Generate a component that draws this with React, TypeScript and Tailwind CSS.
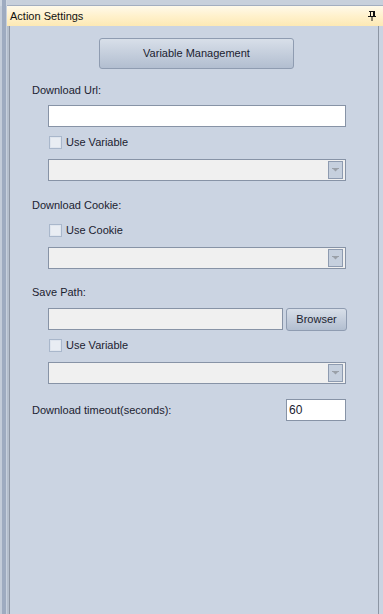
import React from "react";

const font = { fontFamily: '"Liberation Sans", Arial, sans-serif' };

function Checkbox({ label }: { label: string }) {
  return (
    <div className="flex items-center h-[16px] ml-[39px]">
      <div className="w-[13px] h-[13px] border border-[#a9b7cb] bg-[#dfe5ee] p-[1px]">
        <div className="w-full h-full bg-[#e9edf3]" />
      </div>
      <span className="ml-[4px] text-[11px] text-[#1b2230]">{label}</span>
    </div>
  );
}

function Select() {
  return (
    <div className="ml-[38px] w-[298px] h-[22px] border border-[#8793a6] bg-[#f0f0f0] flex justify-end items-center pr-[2px]">
      <div className="w-[15px] h-[18px] border border-[#8e9bb0] bg-[#c6d0de] flex items-center justify-center">
        <svg width="7" height="4" viewBox="0 0 7 4">
          <rect x="0" y="0" width="7" height="1" fill="#9aa0a8" />
          <polygon points="1,1 6,1 3.5,3.5" fill="#9aa0a8" />
        </svg>
      </div>
    </div>
  );
}

export default function App() {
  return (
    <div className="w-[383px] h-[614px] bg-[#c9d2df] flex flex-col overflow-hidden" style={font}>
      <div className="h-[6px] flex shrink-0">
        <div className="w-[7px] flex">
          <div className="w-[2px] bg-[#cdd5e0]" />
          <div className="w-[4px] bg-[#9eabc0]" />
          <div className="w-[1px] bg-[#cdd5e0]" />
        </div>
        <div className="flex-1 bg-[#c8d0dc] border-b border-[#a3aec0]" />
      </div>
      <div className="flex flex-1">
        <div className="w-[7px] flex shrink-0">
          <div className="w-[2px] bg-[#c3ccd9]" />
          <div className="w-[4px] bg-[#9eabc0]" />
          <div className="w-[1px] bg-[#c7d0dd]" />
        </div>
        <div className="flex-1 flex flex-col">
          <div className="h-[20px] bg-gradient-to-b from-[#fff9ea] via-[#fff1cc] to-[#fde9b4] flex items-center justify-between pl-[3px] pr-[7px] shrink-0">
            <span className="text-[11px] text-[#111]">Action Settings</span>
            <svg width="8" height="10" viewBox="0 0 8 10">
              <rect x="1" y="0" width="6" height="1" fill="#111" />
              <rect x="2" y="1" width="1" height="5" fill="#111" />
              <rect x="5" y="1" width="2" height="5" fill="#111" />
              <rect x="0" y="5" width="8" height="1" fill="#111" />
              <rect x="3.5" y="6" width="1" height="4" fill="#111" />
            </svg>
          </div>
          <div className="flex-1 flex">
            <div className="w-[2px] bg-[#b5bfcd]" />
            <div className="w-[1px] bg-[#8d96a4]" />
            <div className="flex-1 bg-[#cbd4e2] flex flex-col text-[11px] text-[#1b2230]">
              <div className="mt-[12px] ml-[89px] w-[195px] h-[31px] rounded-[3px] border border-[#8f9cb1] bg-gradient-to-b from-[#d8dfe9] to-[#b2bed0] flex items-center justify-center">
                Variable Management
              </div>
              <div className="mt-[13px] ml-[22px] h-[16px] leading-[16px]">Download Url:</div>
              <div className="mt-[7px] ml-[38px] w-[298px] h-[22px] border border-[#8793a6] bg-white" />
              <div className="mt-[7px]"><Checkbox label="Use Variable" /></div>
              <div className="mt-[9px]"><Select /></div>
              <div className="mt-[16px] ml-[22px] h-[16px] leading-[16px]">Download Cookie:</div>
              <div className="mt-[9px]"><Checkbox label="Use Cookie" /></div>
              <div className="mt-[9px]"><Select /></div>
              <div className="mt-[15px] ml-[22px] h-[16px] leading-[16px]">Save Path:</div>
              <div className="mt-[8px] ml-[38px] flex">
                <div className="w-[235px] h-[22px] border border-[#8793a6] bg-[#f0f0f0]" />
                <div className="ml-[3px] w-[61px] h-[23px] rounded-[3px] border border-[#8f9cb1] bg-gradient-to-b from-[#d8dfe9] to-[#b2bed0] flex items-center justify-center">
                  Browser
                </div>
              </div>
              <div className="mt-[6px]"><Checkbox label="Use Variable" /></div>
              <div className="mt-[9px]"><Select /></div>
              <div className="mt-[15px] flex items-center">
                <div className="ml-[22px] flex-1">Download timeout(seconds):</div>
                <div className="w-[60px] h-[22px] border border-[#8793a6] bg-white flex items-center pl-[2px] mr-[32px] text-[12px]">60</div>
              </div>
            </div>
            <div className="w-[1px] bg-[#8d96a4]" />
            <div className="w-[4px] bg-[#cbd4e2]" />
          </div>
        </div>
      </div>
    </div>
  );
}
